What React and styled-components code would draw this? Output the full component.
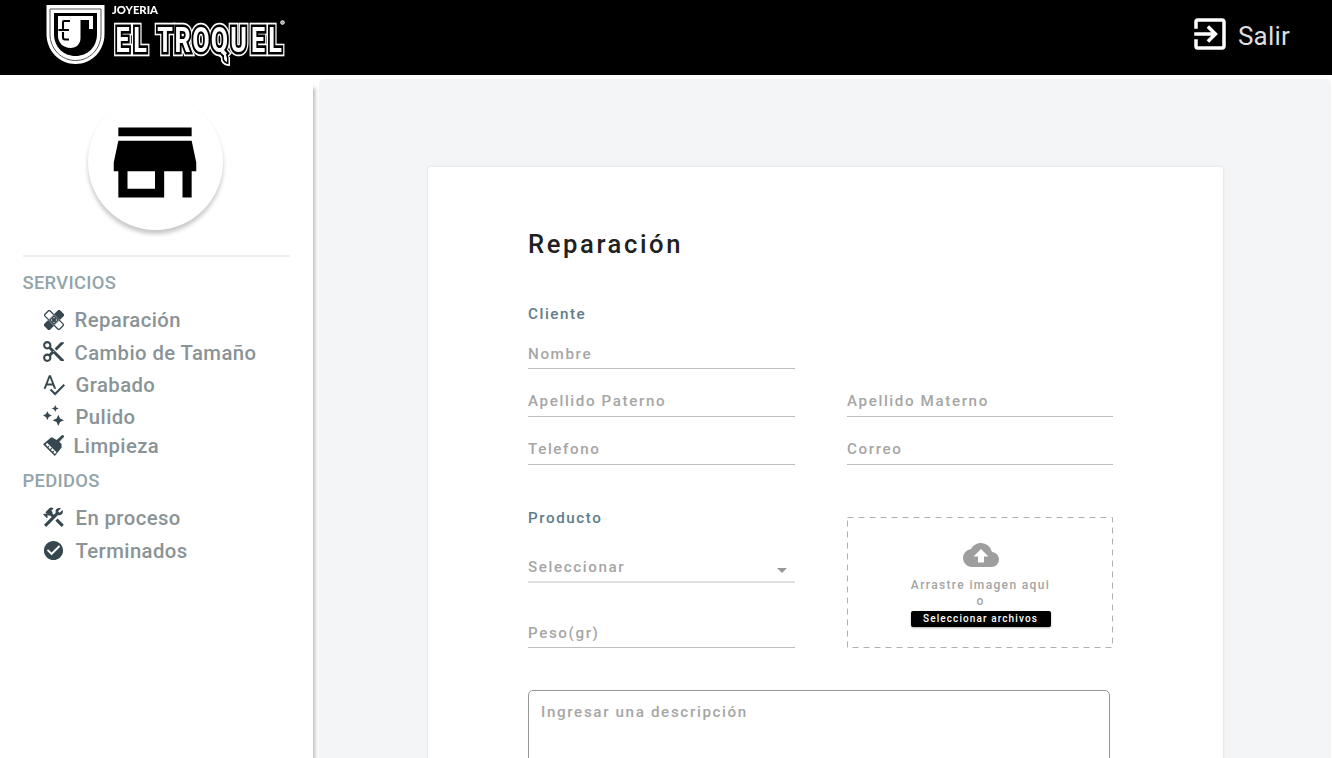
import React from 'react';
import styled, { createGlobalStyle } from 'styled-components';
import { MdExitToApp, MdContentCut, MdSpellcheck, MdCheckCircle, MdBackup } from 'react-icons/md';

const GlobalStyle = createGlobalStyle`
  * { box-sizing: border-box; }
  body { margin: 0; background: #fff; font-family: Roboto, "Liberation Sans", sans-serif; }
`;

const Page = styled.div`
  height: 758px;
  overflow: hidden;
  display: flex;
  flex-direction: column;
`;

const Header = styled.header`
  flex: 0 0 75px;
  background: #000;
  display: flex;
  justify-content: space-between;
  align-items: flex-start;
  padding: 0 42px 0 43px;
`;

const LogoArt = styled.svg`
  display: block;
  overflow: visible;
  will-change: transform;
`;

const Exit = styled.button`
  display: flex;
  align-items: center;
  gap: 7px;
  margin: 11px 0 0;
  padding: 0;
  border: 0;
  background: none;
  color: #fff;
  font: 400 26px/42px Roboto, sans-serif;
  letter-spacing: 0.2px;
`;

const ExitLabel = styled.span`
  color: #dedede;
  padding-top: 4px;
`;

const Body = styled.div`
  flex: 1;
  display: flex;
  min-height: 0;
`;

const Sidebar = styled.aside`
  width: 313px;
  margin-top: 9px;
  padding: 10px 22.5px 0;
  background: #fff;
  box-shadow: 2px 4px 4px rgba(0, 0, 0, 0.28);
  clip-path: inset(0 -8px 0 0);
`;

const Avatar = styled.div`
  width: 135px;
  height: 136px;
  margin: 0 0 0 65.5px;
  padding-right: 1px;
  border-radius: 50%;
  background: #fff;
  box-shadow: 0 4px 4px rgba(0, 0, 0, 0.22);
  display: flex;
  align-items: center;
  justify-content: center;
`;

const Divider = styled.hr`
  width: 267px;
  height: 2px;
  border: 0;
  margin: 25px 0 0;
  background: #eeefef;
`;

const GroupTitle = styled.h2`
  margin: ${(p) => p.$top}px 0 0;
  font-size: 18.4px;
  line-height: 24px;
  font-weight: 500;
  color: #93a4aa;
  letter-spacing: 0.3px;
`;

const NavList = styled.ul`
  list-style: none;
  margin: ${(p) => p.$top}px 0 0;
  padding: 0 0 0 20px;
`;

const NavItem = styled.li`
  display: flex;
  align-items: center;
  height: ${(p) => p.$height || 32}px;
  color: #8a9396;
  font-size: 20.3px;
  line-height: 24px;
  font-weight: 500;
  letter-spacing: 0.42px;
  white-space: nowrap;
`;

const IconSlot = styled.span`
  flex: none;
  display: flex;
  align-items: center;
  justify-content: center;
  width: 22px;
  height: 22px;
  margin: 0 ${(p) => p.$gap || 10}px ${(p) => p.$lift || 0}px 0;
  color: #37474f;

  svg {
    flex: none;
    width: ${(p) => p.$size || 21}px;
    height: ${(p) => p.$size || 21}px;
  }
`;

const Main = styled.main`
  flex: 1;
  margin: 4px 1px 0 6px;
  padding: 88px 0 0 109px;
  border-radius: 5px 5px 0 0;
  background: #f4f5f7;
`;

const Card = styled.form`
  width: 795px;
  height: 700px;
  padding: 61px 100px 0;
  border-radius: 3px;
  background: #fff;
  box-shadow: 0 0 3px rgba(0, 0, 0, 0.12);
`;

const Title = styled.h1`
  margin: 0;
  font-size: 25.6px;
  line-height: 32px;
  font-weight: 500;
  letter-spacing: 2.6px;
  color: #212121;
`;

const SectionTitle = styled.h2`
  margin: 0;
  font-size: 15.2px;
  line-height: 20px;
  font-weight: 500;
  letter-spacing: 1.55px;
  color: #607d8b;
`;

const ClientTitle = styled(SectionTitle)`
  margin-top: 44px;
`;

const Fields = styled.div`
  display: grid;
  grid-template-columns: 266.5px 266px;
  column-gap: 52.5px;
`;

const ClientFields = styled(Fields)`
  margin-top: 19px;
  grid-template-rows: 26px 48px 48px;
`;

const Field = styled.div`
  display: flex;
  align-items: flex-end;
  justify-content: space-between;
  height: ${(p) => p.$height || 'auto'};
  padding-bottom: ${(p) => p.$bottom || 4}px;
  border-bottom: ${(p) => (p.$thick ? '2px solid #e0e0e0' : '1px solid #bdbdbd')};
  color: #a6a6a6;
  font-size: 15.2px;
  line-height: 20px;
  font-weight: 500;
  letter-spacing: 1.6px;
  grid-column-start: ${(p) => p.$column || 'auto'};
`;

const Caret = styled.span`
  width: 0;
  height: 0;
  margin: 0 7.5px 4px 0;
  border: 5px solid transparent;
  border-top-color: #979797;
  border-bottom: 0;
`;

const ProductFields = styled(Fields)`
  margin-top: 43px;
`;

const Column = styled.div`
  display: flex;
  flex-direction: column;
`;

const DropZone = styled.div`
  position: relative;
  height: 131px;
  margin-top: 9px;
  padding: 20px 0 0 1px;
  display: flex;
  flex-direction: column;
  align-items: center;
  color: #a4a4a4;
  font-size: 12px;
  line-height: 16px;
  font-weight: 500;
  letter-spacing: 1.35px;

  > span:first-of-type {
    margin-top: 4px;
  }
`;

const Outline = styled.svg`
  position: absolute;
  inset: 0;
  width: 266px;
  height: 131px;
`;

const BrowseButton = styled.button`
  width: 140px;
  height: 16px;
  margin: 2px 0 0;
  padding: 0 0 1px;
  border: 0;
  border-radius: 2px;
  background: #000;
  color: #fff;
  box-shadow: 0 1px 2px rgba(0, 0, 0, 0.3);
  font: 500 10px/14px Roboto, sans-serif;
  letter-spacing: 1.1px;
`;

const Description = styled.div`
  width: 582px;
  height: 140px;
  margin-top: 42px;
  padding: 11px 12px;
  border: 1px solid #979797;
  border-radius: 5px;
  color: #a6a6a6;
  font-size: 15.2px;
  line-height: 20px;
  font-weight: 500;
  letter-spacing: 1.63px;
`;

const SQUEEZE = 0.7;
const LETTER_CENTERS = [122.5, 140, 151, 165, 182.5, 201, 219.5, 238.5, 258, 275];

function LogoName() {
  const common = {
    x: LETTER_CENTERS.map((c) => (c / SQUEEZE).toFixed(1)).join(' '),
    y: 52.5,
    textAnchor: 'middle',
    fontFamily: 'Roboto, sans-serif',
    fontWeight: 700,
    fontSize: 36,
    children: 'EL TROQUEL',
  };
  return (
    <>
      <g transform={`scale(${SQUEEZE} 1)`}>
        <text {...common} fill="#fff" stroke="#fff" strokeWidth="8.600" />
      </g>
      <path d="M216 54l5 4v3q2 5 9 5v-9z" fill="#fff" />
      <g transform={`scale(${SQUEEZE} 1)`}>
        <text {...common} fill="#000" stroke="#000" strokeWidth="5.200" />
      </g>
      <path d="M219 52l3.500 4v4q2 4 6 4.200V57l-3-5z" fill="#000" />
      <path d="M221 50v3l3 2v4q1 3 3 3v-4l-2-6z" fill="#fff" />
      <g transform={`scale(${SQUEEZE} 1)`}>
        <text {...common} fill="#fff" />
      </g>
    </>
  );
}

function Logo() {
  return (
    <LogoArt width="246" height="75" viewBox="43 0 246 75">
      <path d="M46.500 5H104.500V34c0 17-13 30-29 30S46.500 51 46.500 34z" fill="#fff" />
      <path d="M50 9h51V34c0 15-11.500 26.500-25.500 26.500S50 49 50 34z" fill="none" stroke="#555" strokeWidth="1" />
      <path d="M54 13h43V34c0 13-9.500 22-21.500 22S54 47 54 34z" fill="#000" />
      <path d="M58 16h35v13h-4v-9h-8.500v18c0 6-4 10-10 10-7 0-12.500-5-12.500-12z" fill="#fff" />
      <path d="M70 21h-6q-1 0-1 1v7.500M58.500 30H69M63 32v5.500q0 2 2 2h4" fill="none" stroke="#000" strokeWidth="2.100" />
      <text x="112" y="13.500" fill="#fff" fontFamily="Lato, sans-serif" fontWeight="900" fontSize="11.500" textLength="46" lengthAdjust="spacingAndGlyphs">JOYERIA</text>
      <LogoName />
      <circle cx="282.500" cy="22.500" r="1.800" fill="#999" stroke="#fff" />
    </LogoArt>
  );
}

function StoreIcon() {
  return (
    <svg width="110" height="105" viewBox="0 0 24 24" preserveAspectRatio="none">
      <path d="M20 4H4v2h16V4zm1 10v-2l-1-5H4l-1 5v2h1v6h10v-6h4v6h2v-6h1zm-9 4H6v-4h6v4z" />
    </svg>
  );
}

function BandageIcon() {
  return (
    <svg viewBox="0 0 24 24" fill="none">
      <g transform="rotate(45 12 12)">
        <rect x="-0.500" y="7.600" width="25" height="8.800" rx="1.600" stroke="currentColor" strokeWidth="1.500" />
      </g>
      <g transform="rotate(-45 12 12)">
        <rect x="-1.500" y="7" width="27" height="10" rx="1.800" fill="currentColor" />
        <rect x="7.400" y="7.600" width="9.200" height="8.800" stroke="#fff" strokeWidth="0.500" />
      </g>
      <g fill="#fff">
        <circle cx="12" cy="9.200" r=".8" />
        <circle cx="9.200" cy="12" r=".8" />
        <circle cx="14.800" cy="12" r=".8" />
        <circle cx="12" cy="14.800" r=".8" />
      </g>
    </svg>
  );
}

function SparklesIcon() {
  return (
    <svg viewBox="0 0 24 24" fill="currentColor">
      <path d="M14 0l1.200 2.900L18 4l-2.800 1.200L14 8l-1.200-2.800L10 4l2.800-1.100zM5 7l1.600 3.400L10 12l-3.400 1.600L5 17l-1.600-3.400L0 12l3.400-1.600zM17.500 11l2 4.300L24 17.500l-4.500 2L17.500 24l-2-4.500-4.500-2 4.500-2.200z" />
    </svg>
  );
}

function BrushIcon() {
  return (
    <svg viewBox="0 0 24 24">
      <path d="M23.600 0.600q1 1 0 2l-5 5 2.300 2.400q1 1 0 2.200L21.500 14 13.500 24 0 10.500 8.800 3q1.300-1 2.400 0l4.300 2.800L21.300 0.600q1.200-1 2.300 0z" fill="currentColor" />
      <path d="M3 10.500l1.800-1.500L15.500 19.700l-1.900 2-1.900-1.900 1.100-1.100-1-1-1.100 1.100-1.700-1.700 1.600-1.600-.9-.9-1.600 1.600-1.900-1.900 1.100-1.100-1-1-1.100 1.100z" fill="#fff" />
    </svg>
  );
}

function ToolsIcon() {
  return (
    <svg viewBox="1.900 2.100 20.200 20.200" fill="currentColor">
      <path d="M13.780 15.300l6 6 2.110-2.160-6-6-2.110 2.160m3.720-5.200c-.39 0-.81-.05-1.140-.19L4.970 21.250l-2.110-2.110 7.410-7.400-1.770-1.780-.72.700-1.450-1.410v2.860l-.7.700-3.520-3.560.7-.7h2.810l-1.400-1.410 3.560-3.560a2.976 2.976 0 014.220 0L9.890 5.740l1.410 1.400-.71.710 1.790 1.780 1.820-1.880c-.14-.33-.2-.75-.2-1.120a3.490 3.490 0 013.500-3.520c.59 0 1.110.14 1.580.42L16.410 6.200l1.500 1.500 2.670-2.670c.28.47.42.970.42 1.600 0 1.920-1.550 3.470-3.500 3.470z" />
    </svg>
  );
}

export default function App() {
  return (
    <Page>
      <GlobalStyle />
      <Header>
        <Logo />
        <Exit type="button">
          <MdExitToApp size={42} />
          <ExitLabel>Salir</ExitLabel>
        </Exit>
      </Header>
      <Body>
        <Sidebar>
          <Avatar><StoreIcon /></Avatar>
          <Divider />
          <GroupTitle $top={14}>SERVICIOS</GroupTitle>
          <NavList $top={8}>
            <NavItem $height={34}><IconSlot $size={20} $lift={1}><BandageIcon /></IconSlot>Reparación</NavItem>
            <NavItem><IconSlot $size={25} $lift={4}><MdContentCut /></IconSlot>Cambio de Tamaño</NavItem>
            <NavItem><IconSlot $size={25} $gap={11} $lift={2}><MdSpellcheck /></IconSlot>Grabado</NavItem>
            <NavItem><IconSlot $gap={11} $lift={3}><SparklesIcon /></IconSlot>Pulido</NavItem>
            <NavItem $height={26}><IconSlot $gap={9} $lift={2}><BrushIcon /></IconSlot>Limpieza</NavItem>
          </NavList>
          <GroupTitle $top={10}>PEDIDOS</GroupTitle>
          <NavList $top={8}>
            <NavItem $height={34}><IconSlot $gap={11} $lift={2}><ToolsIcon /></IconSlot>En proceso</NavItem>
            <NavItem><IconSlot $size={23} $gap={11} $lift={1}><MdCheckCircle /></IconSlot>Terminados</NavItem>
          </NavList>
        </Sidebar>
        <Main>
          <Card>
            <Title>Reparación</Title>
            <ClientTitle>Cliente</ClientTitle>
            <ClientFields>
              <Field>Nombre</Field>
              <Field $column={1} $bottom={5}>Apellido Paterno</Field>
              <Field $bottom={5}>Apellido Materno</Field>
              <Field $bottom={5}>Telefono</Field>
              <Field $bottom={5}>Correo</Field>
            </ClientFields>
            <ProductFields>
              <Column>
                <SectionTitle>Producto</SectionTitle>
                <Field $height="55px" $thick>Seleccionar<Caret /></Field>
                <Field $height="65px">Peso(gr)</Field>
              </Column>
              <DropZone>
                <Outline>
                  <rect x="0.500" y="0.500" width="265" height="130" fill="none" stroke="#b0b0b0" strokeDasharray="6 5" />
                </Outline>
                <MdBackup size={36} color="#9e9e9e" />
                <span>Arrastre imagen aqui</span>
                <span>o</span>
                <BrowseButton type="button">Seleccionar archivos</BrowseButton>
              </DropZone>
            </ProductFields>
            <Description>Ingresar una descripción</Description>
          </Card>
        </Main>
      </Body>
    </Page>
  );
}
